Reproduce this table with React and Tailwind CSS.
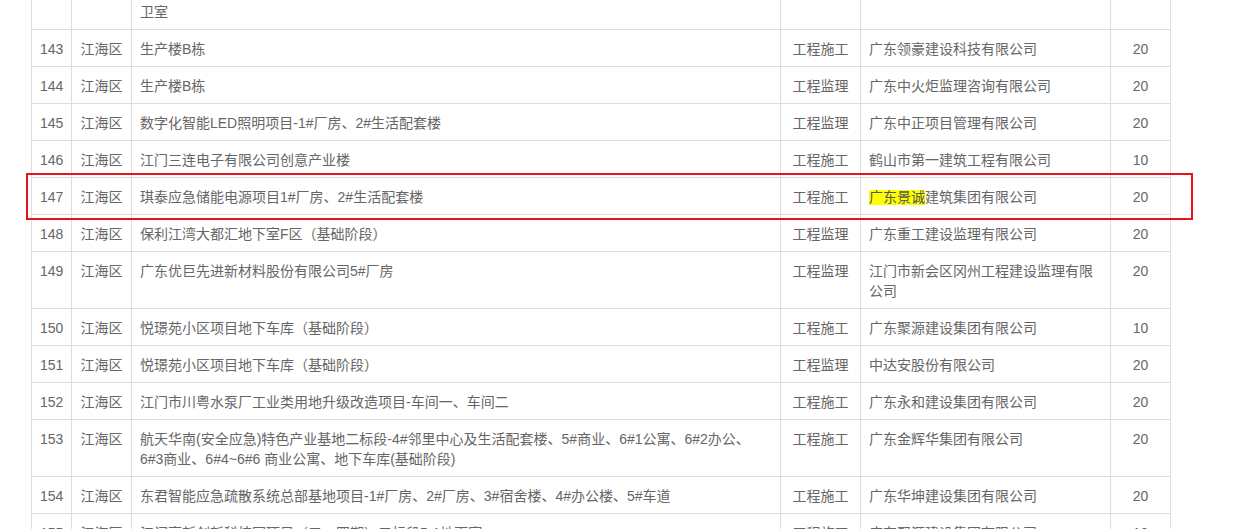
import React from "react";

const rows = [
  { no: "142", area: "江海区", name: ["江门市江海区高新技术产业园区某某项目1#厂房、2#厂房、3#宿舍楼、4#办公楼、5#门", "卫室"], type: "", company: [""], score: "" },
  { no: "143", area: "江海区", name: ["生产楼B栋"], type: "工程施工", company: ["广东领豪建设科技有限公司"], score: "20" },
  { no: "144", area: "江海区", name: ["生产楼B栋"], type: "工程监理", company: ["广东中火炬监理咨询有限公司"], score: "20" },
  { no: "145", area: "江海区", name: ["数字化智能LED照明项目-1#厂房、2#生活配套楼"], type: "工程监理", company: ["广东中正项目管理有限公司"], score: "20" },
  { no: "146", area: "江海区", name: ["江门三连电子有限公司创意产业楼"], type: "工程施工", company: ["鹤山市第一建筑工程有限公司"], score: "10" },
  { no: "147", area: "江海区", name: ["琪泰应急储能电源项目1#厂房、2#生活配套楼"], type: "工程施工", company: ["广东景诚建筑集团有限公司"], score: "20", hl: true },
  { no: "148", area: "江海区", name: ["保利江湾大都汇地下室F区（基础阶段）"], type: "工程监理", company: ["广东重工建设监理有限公司"], score: "20" },
  { no: "149", area: "江海区", name: ["广东优巨先进新材料股份有限公司5#厂房"], type: "工程监理", company: ["江门市新会区冈州工程建设监理有限", "公司"], score: "20" },
  { no: "150", area: "江海区", name: ["悦璟苑小区项目地下车库（基础阶段）"], type: "工程施工", company: ["广东聚源建设集团有限公司"], score: "10" },
  { no: "151", area: "江海区", name: ["悦璟苑小区项目地下车库（基础阶段）"], type: "工程监理", company: ["中达安股份有限公司"], score: "20" },
  { no: "152", area: "江海区", name: ["江门市川粤水泵厂工业类用地升级改造项目-车间一、车间二"], type: "工程施工", company: ["广东永和建设集团有限公司"], score: "20" },
  { no: "153", area: "江海区", name: ["航天华南(安全应急)特色产业基地二标段-4#邻里中心及生活配套楼、5#商业、6#1公寓、6#2办公、", "6#3商业、6#4~6#6 商业公寓、地下车库(基础阶段)"], type: "工程施工", company: ["广东金辉华集团有限公司"], score: "20" },
  { no: "154", area: "江海区", name: ["东君智能应急疏散系统总部基地项目-1#厂房、2#厂房、3#宿舍楼、4#办公楼、5#车道"], type: "工程施工", company: ["广东华坤建设集团有限公司"], score: "20" },
  { no: "155", area: "江海区", name: ["江门高新创新科技园项目（二、四期）二标段5-1地下室"], type: "工程施工", company: ["广东聚源建设集团有限公司"], score: "10" },
];

function Lines({ lines }) {
  return lines.map((l, i) => (
    <React.Fragment key={i}>
      {i > 0 && <br />}
      {l}
    </React.Fragment>
  ));
}

const td = "border border-[#dddddd] px-2 pt-[9px] pb-[7px] align-top leading-5";

export default function App() {
  return (
    <div
      className="relative h-[529px] w-[1234px] overflow-hidden bg-white text-[14px] text-[#666666]"
      style={{ fontFamily: '"Liberation Sans", "Noto Sans CJK SC", sans-serif' }}
    >
      <table className="ml-[31px] -mt-[28px] w-[1140px] table-fixed border-collapse">
        <colgroup>
          <col className="w-[40px]" />
          <col className="w-[60px]" />
          <col className="w-[649px]" />
          <col className="w-[80px]" />
          <col className="w-[250px]" />
          <col className="w-[60px]" />
        </colgroup>
        <tbody>
          {rows.map((r) => (
            <tr key={r.no}>
              <td className={`${td} text-center px-0`}>{r.no}</td>
              <td className={`${td} text-center px-0`}>{r.area}</td>
              <td className={td}>
                <Lines lines={r.name} />
              </td>
              <td className={`${td} text-center px-0`}>{r.type}</td>
              <td className={td}>
                {r.hl ? (
                  <>
                    <span className="inline-block h-[15px] leading-[15px] bg-[#ffff00] text-[#555555]">广东景诚</span>
                    建筑集团有限公司
                  </>
                ) : (
                  <Lines lines={r.company} />
                )}
              </td>
              <td className={`${td} text-center px-0`}>{r.score}</td>
            </tr>
          ))}
        </tbody>
      </table>
      <div className="pointer-events-none absolute left-[26px] top-[173px] h-[47px] w-[1167px] border-2 border-[#e5141b]" />
    </div>
  );
}
